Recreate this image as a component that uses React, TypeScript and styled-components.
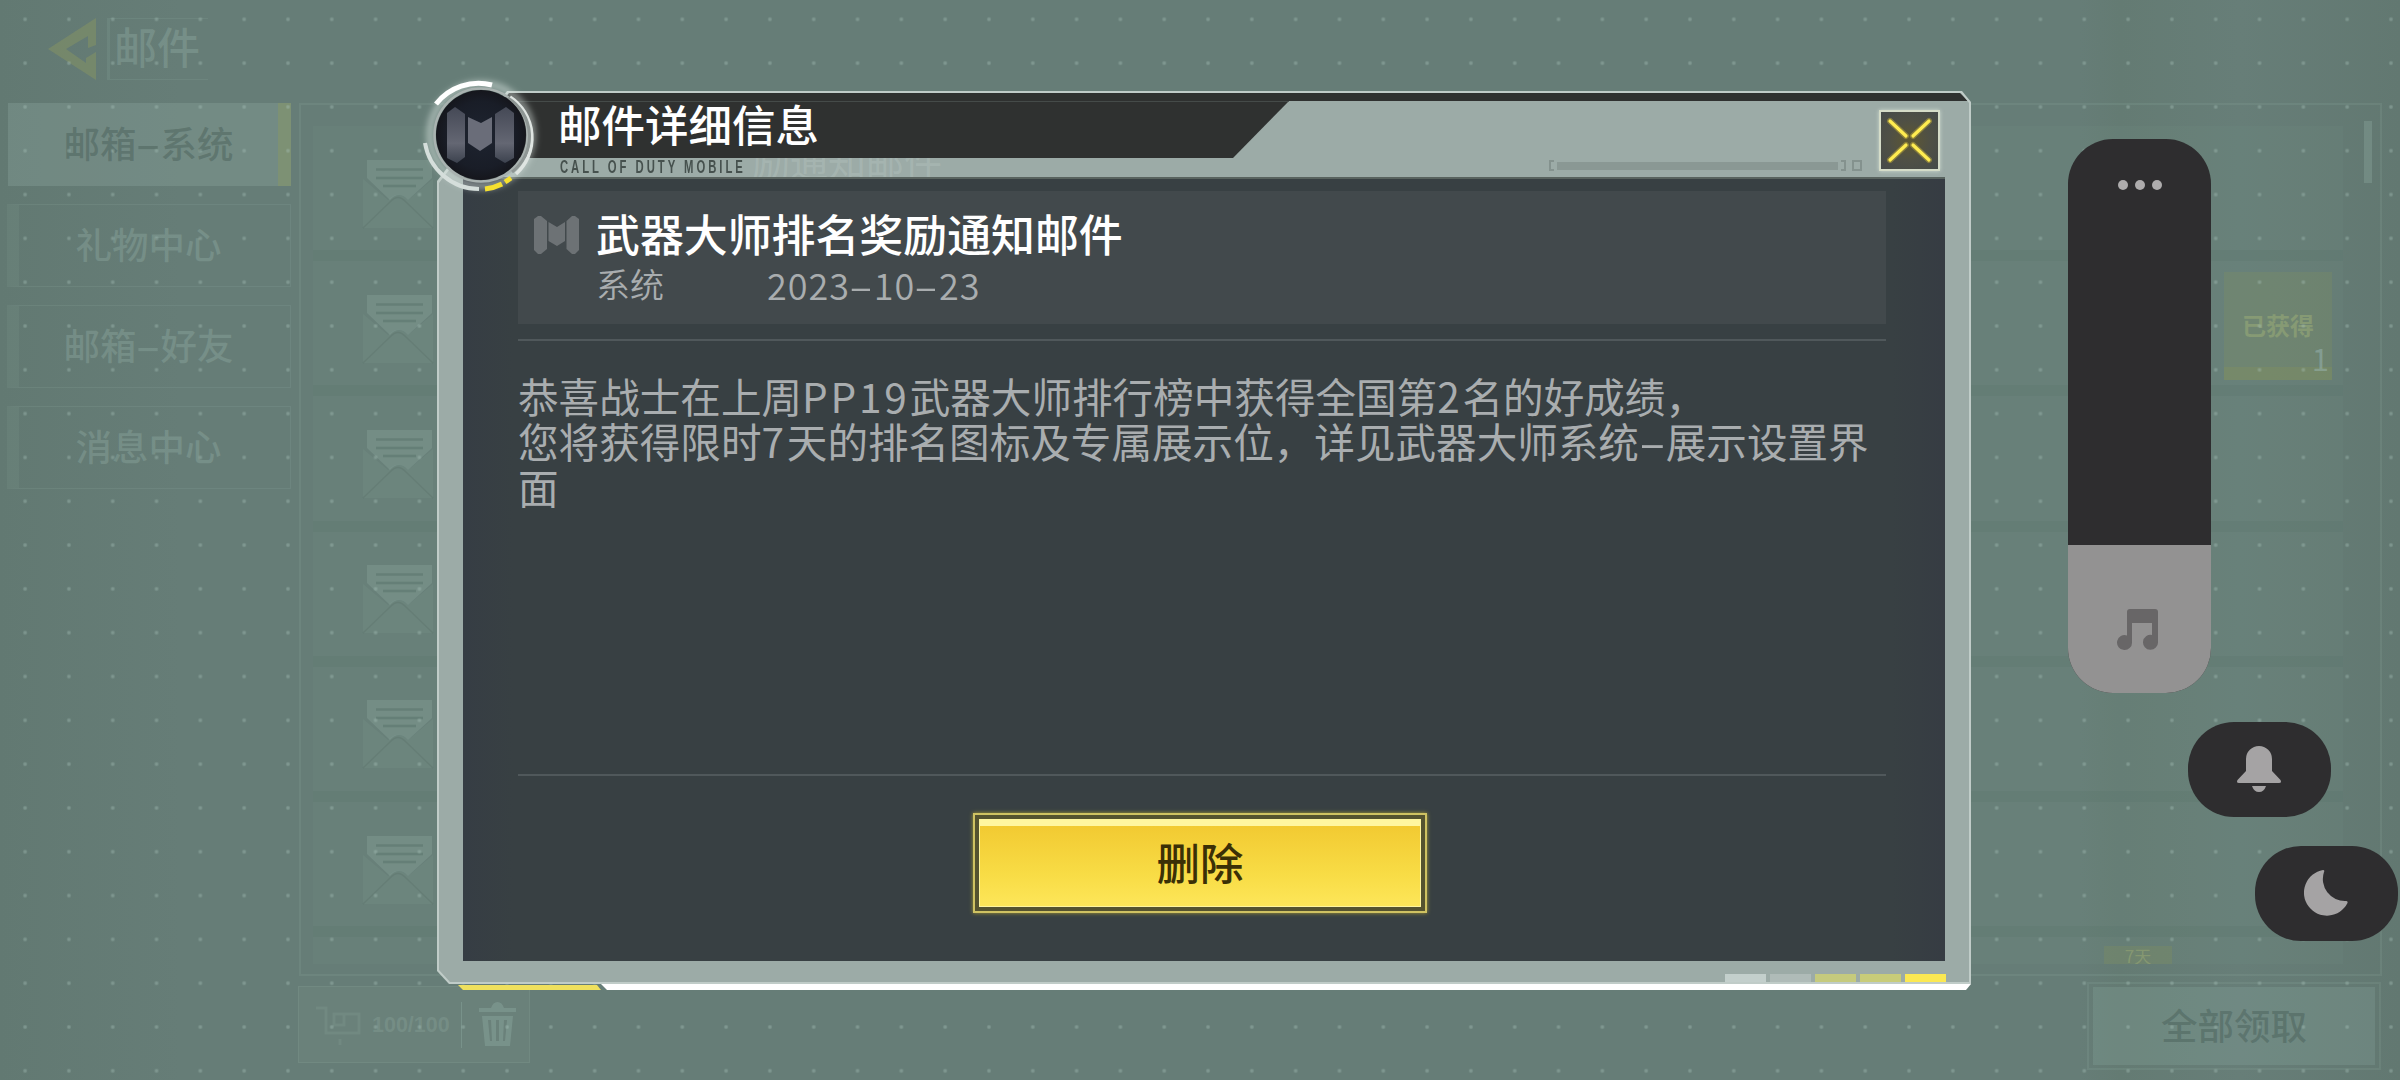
import { ReactNode } from 'react';
import styled, { createGlobalStyle, css } from 'styled-components';

const colors = {
  base: '#667d77',
  ghost: 'rgba(150, 178, 169, 0.34)',
  ghostLine: 'rgba(150, 178, 169, 0.16)',
  ghostDark: 'rgba(66, 88, 82, 0.42)',
  ghostGold: 'rgba(158, 165, 85, 0.3)',
  frame: '#9caba7',
  frameEdge: '#c0ccc8',
  dark: '#384043',
  band: '#2f3130',
  card: '#42494c',
  line: '#50585b',
  text: '#a9adaf',
  system: '#2e2d2f',
  systemIcon: '#a5a3a4',
};

const GlobalStyle = createGlobalStyle`
  * { box-sizing: border-box; }

  body {
    margin: 0;
    font-family: "Noto Sans CJK SC", sans-serif;
    background: ${colors.base};
  }
`;

const Screen = styled.main`
  position: relative;
  width: 2400px;
  height: 1080px;
  overflow: hidden;
  background: linear-gradient(90deg, #627972 0, #667d77 180px, #667d77 2080px, #647b73 2120px, #677e78 2240px, #627871 2400px);
`;

const Dots = styled.div`
  position: absolute;
  inset: 0;
  background: radial-gradient(circle at 50% 50%, rgba(170, 196, 188, 0.45) 0, rgba(170, 196, 188, 0.28) 1.4px, transparent 2.6px);
  background-size: 43.82px 43.82px;
  background-position: 3.2px -2.6px;
`;

/* ---- mailbox behind the dialog ---- */

const Mailbox = styled.div`
  display: flex;
  flex-direction: column;
  height: 1080px;
  color: ${colors.ghost};
`;

const TopBar = styled.header`
  display: flex;
  align-items: center;
  height: 103px;
  padding: 0 0 5px 48px;
`;

const PageTitle = styled.h1`
  display: flex;
  align-items: center;
  width: 101px;
  height: 62px;
  margin: 0 0 0 11px;
  padding: 0 0 7px 4px;
  border-left: 3px solid ${colors.ghostLine};
  border-top: 1px solid ${colors.ghostLine};
  border-bottom: 1px solid ${colors.ghostLine};
  font-size: 43px;
  font-weight: 500;
  line-height: 1;
  white-space: nowrap;
`;

const Columns = styled.div`
  display: flex;
  gap: 8px;
  height: 873px;
  padding-left: 7px;
`;

const Tabs = styled.nav`
  display: flex;
  flex-direction: column;
  gap: 18px;
  width: 284px;
`;

const Tab = styled.div<{ $active?: boolean }>`
  display: flex;
  align-items: center;
  justify-content: center;
  height: 83px;
  padding: 0 12px 3px 0;
  border: 1px solid ${colors.ghostLine};
  border-left: 12px solid rgba(150, 178, 169, 0.1);
  font-size: 36.5px;
  font-weight: 500;
  line-height: 1;
  white-space: nowrap;

  ${props => props.$active && css`
    color: ${colors.ghostDark};
    background: rgba(150, 178, 169, 0.27);
    border: 0;
    border-right: 13px solid rgba(150, 160, 80, 0.3);
    padding: 0 0 3px 11px;
    margin-left: 1px;
  `}
`;

const Dash = styled.span`
  display: inline-block;
  width: 0.66em;
  text-align: center;
  transform: scaleX(2);
`;

const ListPanel = styled.section`
  display: flex;
  justify-content: space-between;
  width: 2083px;
  padding: 21px 8px 10px 12px;
  border: 2px solid ${colors.ghostLine};
`;

const Rows = styled.div`
  display: flex;
  flex-direction: column;
  width: 2030px;
  overflow: hidden;
`;

const MailRow = styled.div`
  display: flex;
  align-items: center;
  justify-content: space-between;
  flex: none;
  height: 135.2px;
  padding: 9px 11px 0 49px;
  border-bottom: 11px solid rgba(70, 94, 87, 0.1);
  background: rgba(130, 160, 152, 0.08);
`;

const Scroller = styled.div`
  width: 8px;
  height: 62px;
  margin: -5px 0 0;
  background: rgba(150, 178, 169, 0.3);
`;

const Reward = styled.div`
  position: relative;
  display: flex;
  align-items: center;
  justify-content: center;
  width: 108px;
  height: 108px;
  margin-top: -3px;
  padding-top: 9px;
  border-bottom: 13px solid rgba(158, 160, 70, 0.16);
  background: rgba(158, 160, 70, 0.14);
  color: rgba(158, 176, 120, 0.5);
  font-size: 24px;
  font-weight: 700;
`;

const RewardCount = styled.span`
  position: absolute;
  right: 3px;
  bottom: -7px;
  color: rgba(160, 190, 190, 0.45);
  font-size: 31px;
  font-weight: 400;
  line-height: 32px;
`;

const ListBadge = styled.div`
  align-self: flex-start;
  width: 68px;
  height: 19px;
  margin: 0 160px 0 auto;
  background: rgba(158, 160, 70, 0.16);
  color: rgba(170, 184, 120, 0.4);
  font-size: 17px;
  line-height: 19px;
  text-align: center;
`;

const BottomBar = styled.footer`
  display: flex;
  align-items: flex-start;
  justify-content: space-between;
  padding: 6px 19px 0 298px;
`;

const Capacity = styled.div`
  display: flex;
  align-items: center;
  width: 232px;
  height: 77px;
  margin-top: 4px;
  padding-left: 17px;
  border: 1px solid ${colors.ghostLine};
  background: rgba(150, 178, 169, 0.08);

  svg {
    flex: none;
  }

  svg:last-child {
    margin-left: 17px;
  }
`;

const CapacityCount = styled.span`
  width: 78px;
  margin: 2px 11px 0 11px;
  font-family: "Liberation Sans", sans-serif;
  font-size: 21.5px;
  font-weight: 700;
  color: rgba(150, 178, 169, 0.26);
`;

const CapacityLine = styled.div`
  width: 1px;
  height: 46px;
  background: ${colors.ghost};
`;

const ClaimAll = styled.div`
  width: 294px;
  height: 88px;
  padding: 3px 4px;
  border: 2px solid ${colors.ghostLine};
`;

const ClaimAllFace = styled.div`
  display: flex;
  align-items: center;
  justify-content: center;
  height: 78px;
  padding-bottom: 1px;
  background: rgba(150, 186, 176, 0.2);
  color: ${colors.ghostDark};
  font-size: 36.5px;
  font-weight: 500;
  line-height: 1;
`;

/* ---- dialog ---- */

const Dialog = styled.section`
  position: absolute;
  left: 437px;
  top: 91px;
  width: 1534px;
`;

const Frame = styled.div`
  height: 893px;
  padding: 2px;
  background: ${colors.frameEdge};
  clip-path: polygon(70px 0, 1525px 0, 1534px 11px, 100% 100%, 12px 100%, 0 880px, 0 90px);
`;

const FrameInner = styled.div`
  height: 889px;
  background: ${colors.frame};
  clip-path: polygon(70px 0, 1522px 0, 1530px 10px, 100% 100%, 11px 100%, 0 877px, 0 90px);
`;

const TopBand = styled.div`
  height: 8px;
  background: ${colors.band};
  clip-path: polygon(0 0, 1521px 0, 1529px 100%, 0 100%);
`;

const DialogHeader = styled.div`
  display: flex;
  justify-content: space-between;
  height: 76px;
`;

const TitleBlock = styled.div`
  width: 850px;
`;

const DialogTitle = styled.h2`
  height: 57px;
  margin: 0;
  padding-left: 119px;
  border-top: 1px solid #454b49;
  background: ${colors.band};
  clip-path: polygon(0 0, 100% 0, 794px 100%, 0 100%);
  color: #fff;
  font-size: 43.5px;
  font-weight: 500;
  line-height: 44px;
`;

const Tagline = styled.div`
  display: flex;
  height: 19px;
  padding-left: 121px;
  overflow: hidden;
  white-space: nowrap;
`;

const TaglineText = styled.span`
  flex: none;
  width: 192px;
  color: #46514e;
  font-family: "Liberation Sans", sans-serif;
  font-size: 17.5px;
  font-weight: 700;
  letter-spacing: 4.6px;
  line-height: 19px;
  transform: scaleX(0.645);
  transform-origin: 0 0;
`;

const TaglineEcho = styled.span`
  color: rgba(185, 200, 195, 0.35);
  font-size: 38px;
  line-height: 4px;
`;

const HeaderTools = styled.div`
  display: flex;
  align-items: flex-start;
  gap: 17px;
  padding: 9px 29px 0 0;
`;

const Slider = styled.div`
  display: flex;
  align-items: center;
  gap: 3px;
  height: 11px;
  margin-top: 50px;
`;

const Bracket = styled.i<{ $side: 'left' | 'right' }>`
  width: 5px;
  height: 11px;
  border: 2px solid #84928e;
  border-${props => (props.$side === 'left' ? 'right' : 'left')}: 0;
`;

const Track = styled.i`
  width: 281px;
  height: 8px;
  background: #8a9894;
`;

const Knob = styled.i`
  width: 10px;
  height: 11px;
  margin-left: 3px;
  border: 2px solid #84928e;
`;

const CloseButton = styled.button`
  display: block;
  width: 61px;
  height: 61px;
  padding: 0;
  border: 2px solid #d5dcc8;
  background: radial-gradient(circle, #5d5732 0, #4f5045 50%, #454a49 100%);
  box-shadow: 0 0 4px rgba(230, 240, 225, 0.7);
`;

const Body = styled.div`
  height: 784px;
  margin: 0 24px;
  padding: 12px 59px 0 55px;
  border-top: 2px solid #59635f;
  background: linear-gradient(90deg, #363d44, ${colors.dark} 50px, ${colors.dark} 1430px, #363c43);
`;

const MailCard = styled.div`
  display: flex;
  height: 133px;
  padding: 17px 16px;
  background: ${colors.card};

  svg {
    margin-top: 8px;
  }
`;

const MailHeading = styled.div`
  margin-left: 17px;
`;

const MailTitle = styled.h3`
  margin: 0;
  color: #fff;
  font-size: 43.9px;
  font-weight: 500;
  line-height: 50px;
  white-space: nowrap;
`;

const MailMeta = styled.div`
  display: flex;
  gap: 103px;
  color: ${colors.text};
  font-size: 34px;
  font-weight: 350;
  line-height: 52px;

  time {
    font-size: 36px;
    letter-spacing: 1px;
  }
`;

const Divider = styled.hr<{ $gap?: number }>`
  height: 2px;
  margin: ${props => props.$gap || 0}px 0 0;
  border: 0;
  background: ${colors.line};
`;

const Message = styled.p`
  height: 433px;
  margin: 0;
  padding-top: 32px;
  color: ${colors.text};
  font-size: 40.6px;
  font-weight: 400;
  line-height: 45.3px;
  white-space: nowrap;
`;

const Latin = styled.span`
  letter-spacing: 2.8px;
`;

const DeleteButton = styled.button`
  display: block;
  width: 454px;
  height: 100px;
  margin: 37px 0 0 455px;
  padding: 4px;
  border: 2px solid #cfc262;
  background: #55532f;
  box-shadow: 0 0 4px #a89b35;
`;

const DeleteFace = styled.span`
  display: flex;
  align-items: center;
  justify-content: center;
  height: 88px;
  border: 1px solid #fff59c;
  border-top: 7px solid #fff6a0;
  background: linear-gradient(#f2ca32, #f8dc45 60%, #fde659);
  color: #3b3006;
  font-family: "Noto Sans CJK SC", sans-serif;
  font-size: 43.5px;
  font-weight: 500;
  line-height: 1;
  padding-bottom: 8px;
`;

const Segments = styled.div`
  display: flex;
  justify-content: flex-end;
  gap: 4px;
  margin: 13px 23px 0;
`;

const Segment = styled.i<{ $color: string }>`
  width: 41px;
  height: 8px;
  background: ${props => props.$color};
`;

const Underline = styled.div`
  display: flex;
  height: 6px;
  padding-left: 21px;
`;

const YellowLine = styled.i`
  width: 143px;
  height: 5px;
  margin-top: 1px;
  background: #efe05d;
  clip-path: polygon(0 0, 139px 0, 100% 100%, 5px 100%);
`;

const WhiteLine = styled.i`
  width: 1370px;
  height: 6px;
  background: #fff;
  clip-path: polygon(0 0, 100% 0, 1365px 100%, 6px 100%);
`;

const Emblem = styled.div`
  position: absolute;
  left: -21px;
  top: -21px;

  svg {
    display: block;
  }
`;

/* ---- system volume panel ---- */

const VolumePanel = styled.aside`
  position: absolute;
  left: 2068px;
  top: 139px;
  display: flex;
  flex-direction: column;
  gap: 29px;
`;

const VolumeBar = styled.div`
  display: flex;
  flex-direction: column;
  justify-content: space-between;
  width: 143px;
  height: 554px;
  border-radius: 45px;
  overflow: hidden;
  background: ${colors.system};
`;

const More = styled.div`
  display: flex;
  justify-content: center;
  gap: 7px;
  padding-top: 41px;

  i {
    width: 10px;
    height: 10px;
    border-radius: 50%;
    background: #aeacad;
  }
`;

const Level = styled.div`
  height: 148px;
  padding: 64px 0 0 49px;
  background: #939292;
`;

const Pill = styled.div<{ $shift: number }>`
  display: flex;
  align-items: center;
  justify-content: center;
  width: 143px;
  height: 95px;
  margin-left: ${props => props.$shift}px;
  padding: 0 2px 1px 0;
  border-radius: 46px;
  background: ${colors.system};
`;

const BackArrow = () => (
  <svg width="48" height="62" viewBox="0 0 48 62">
    <path d="M48 0V27L40 30V18L18 31L38 45V40L48 34V62L0 31Z" fill={colors.ghostGold} />
  </svg>
);

const Envelope = () => (
  <svg width="72" height="72" viewBox="0 0 72 72">
    <path d="M1 22V71H71V22L46 43Q36 32 26 43Z" fill="rgba(150,178,169,.1)" />
    <path d="M1 71L28 45Q36 36 44 45L71 71" fill="none" stroke="rgba(66,88,82,.16)" strokeWidth="1.5" />
    <path d="M5 3H70V21L46 43Q37 33 28 43L5 21Z" fill="rgba(150,178,169,.26)" />
    <path d="M14 12.5H61M14 21H61M21 29H54" stroke="rgba(84,110,103,.45)" strokeWidth="2.4" />
  </svg>
);

const StorageIcon = () => (
  <svg width="45" height="40" viewBox="0 0 45 40" fill="none" stroke={colors.ghostLine} strokeWidth="3">
    <path d="M0 3H10V28H43V9H18V20H28V9" />
    <path d="M24 34V40" />
  </svg>
);

const Trash = () => (
  <svg width="37" height="45" viewBox="0 0 37 45" fill={colors.ghost}>
    <path d="M0 6H12Q14 0 18.500 0T25 6H37V10H0Z" />
    <path fillRule="evenodd" d="M3 14H34L31 44H6ZM9 18L11 39H13L12 18ZM17 18V39H20V18ZM25 18L24 39H26L28 18Z" />
  </svg>
);

const MailMark = () => (
  <svg width="45" height="38" viewBox="0 0 45 38" fill="#6d7275">
    <path d="M0 3L4 0H7L13 5V33L7 38H4L0 34Z" />
    <path d="M14.500 6L23 11L31 6V25L23 30L14.500 25Z" />
    <path d="M45 3L41 0H38L32.500 5V33L38 38H41L45 34Z" />
  </svg>
);

const EmblemIcon = () => (
  <svg width="130" height="130" viewBox="0 0 130 130">
    <defs>
      <radialGradient id="disc">
        <stop offset="0" stopColor="#1e2430" />
        <stop offset=".75" stopColor="#191d27" />
        <stop offset="1" stopColor="#15161c" />
      </radialGradient>
      <linearGradient id="wing" x1="0" y1="0" x2="0" y2="1">
        <stop offset="0" stopColor="#454956" />
        <stop offset=".65" stopColor="#646773" />
        <stop offset="1" stopColor="#3c424e" />
      </linearGradient>
      <filter id="glow" x="-20%" y="-20%" width="140%" height="140%">
        <feGaussianBlur stdDeviation="3" />
      </filter>
    </defs>
    <g fill="none">
      <circle cx="65" cy="65" r="51" stroke="#e8f2ee" strokeOpacity=".5" strokeWidth="7" filter="url(#glow)" />
      <circle cx="65" cy="65" r="46.500" stroke="#a9b2b0" strokeWidth="2.500" />
      <path d="M20 34A54 54 0 0 1 76 15" stroke="#fff" strokeWidth="5" />
      <path d="M94 27A49 49 0 0 1 100 104" stroke="#dfe5e2" strokeWidth="3.500" />
      <path d="M92 28A45 45 0 0 1 96 102" stroke="#8e9694" strokeWidth="3" />
      <path d="M9 73A55 55 0 0 0 63 119" stroke="#d5dedb" strokeWidth="4" />
      <path d="M69 119Q78 118 86 114" stroke="#f6e02f" strokeWidth="5" />
      <path d="M89 112L95 108" stroke="#f6e02f" strokeWidth="5" />
    </g>
    <circle cx="65" cy="65" r="45" fill="url(#disc)" />
    <path d="M31 43L39 37L49 44V87L41 93L31 88Z" fill="url(#wing)" />
    <path d="M52 47L65 53L76 47V73L64 81L52 73Z" fill="#6a6d79" />
    <path d="M98 43L90 37L79 44V87L89 93L98 88Z" fill="url(#wing)" />
  </svg>
);

const CloseIcon = () => (
  <svg width="57" height="57" viewBox="0 0 57 57" fill="none" strokeLinecap="round">
    <path d="M9 9L25 24M48 9L32 24M9 48L25 33M48 48L32 33" stroke="#b6a43a" strokeOpacity=".55" strokeWidth="6" />
    <path d="M9 9L25 24M48 9L32 24M9 48L25 33M48 48L32 33" stroke="#ffec50" strokeWidth="3.200" />
  </svg>
);

const Note = () => (
  <svg width="42" height="42" viewBox="0 0 42 42" fill="#686667">
    <path d="M10 3Q10 0 13 0H38Q41 0 41 3V33A7.500 7.500 0 1 1 35 26V14H15V33A7.500 7.500 0 1 1 10 26.500Z" />
  </svg>
);

const Bell = () => (
  <svg width="44" height="48" viewBox="0 0 44 48" fill={colors.systemIcon}>
    <path d="M9 14A13 13 0 0 1 35 14V26L43.500 35Q45 38 42 38H2Q-1 38 .500 35L9 26Z" />
    <path d="M15 41H29Q27 47 22 47T15 41Z" />
  </svg>
);

const Moon = () => (
  <svg width="44" height="46" viewBox="0 0 44 46" fill={colors.systemIcon}>
    <path d="M19 0Q21 0 20 2A22 22 0 0 0 42 31Q44 31 43.500 33A23 23 0 1 1 19 0Z" />
  </svg>
);

interface TabItem {
  label: ReactNode;
  active?: boolean;
}

const tabs: TabItem[] = [
  { label: <>邮箱<Dash>-</Dash>系统</>, active: true },
  { label: '礼物中心' },
  { label: <>邮箱<Dash>-</Dash>好友</> },
  { label: '消息中心' },
];

const segmentColors = ['#c3cfcc', '#afbbb8', '#c5ca7d', '#c8cc79', '#fbe852'];

const MailboxPage = () => (
  <Mailbox>
    <TopBar>
      <BackArrow />
      <PageTitle>邮件</PageTitle>
    </TopBar>
    <Columns>
      <Tabs>
        {tabs.map((tab, i) => <Tab key={i} $active={tab.active}>{tab.label}</Tab>)}
      </Tabs>
      <ListPanel>
        <Rows>
          {[0, 1, 2, 3, 4, 5].map(i => (
            <MailRow key={i}>
              <Envelope />
              {i === 1 && <Reward>已获得<RewardCount>1</RewardCount></Reward>}
            </MailRow>
          ))}
          <MailRow>
            <ListBadge>7天</ListBadge>
          </MailRow>
        </Rows>
        <Scroller />
      </ListPanel>
    </Columns>
    <BottomBar>
      <Capacity>
        <StorageIcon />
        <CapacityCount>100/100</CapacityCount>
        <CapacityLine />
        <Trash />
      </Capacity>
      <ClaimAll><ClaimAllFace>全部领取</ClaimAllFace></ClaimAll>
    </BottomBar>
  </Mailbox>
);

const MailDialog = () => (
  <Dialog>
    <Frame>
      <FrameInner>
        <TopBand />
        <DialogHeader>
          <TitleBlock>
            <DialogTitle>邮件详细信息</DialogTitle>
            <Tagline>
              <TaglineText>CALL OF DUTY MOBILE</TaglineText>
              <TaglineEcho>励通知邮件</TaglineEcho>
            </Tagline>
          </TitleBlock>
          <HeaderTools>
            <Slider>
              <Bracket $side="left" />
              <Track />
              <Bracket $side="right" />
              <Knob />
            </Slider>
            <CloseButton aria-label="close"><CloseIcon /></CloseButton>
          </HeaderTools>
        </DialogHeader>
        <Body>
          <MailCard>
            <MailMark />
            <MailHeading>
              <MailTitle>武器大师排名奖励通知邮件</MailTitle>
              <MailMeta>
                <span>系统</span>
                <time>2023<Dash>-</Dash>10<Dash>-</Dash>23</time>
              </MailMeta>
            </MailHeading>
          </MailCard>
          <Divider $gap={15} />
          <Message>
            恭喜战士在上周<Latin>PP19</Latin>武器大师排行榜中获得全国第<Latin>2</Latin>名的好成绩，<br />
            您将获得限时<Latin>7</Latin>天的排名图标及专属展示位，详见武器大师系统<Dash>-</Dash>展示设置界<br />
            面
          </Message>
          <Divider />
          <DeleteButton><DeleteFace>删除</DeleteFace></DeleteButton>
        </Body>
        <Segments>
          {segmentColors.map(color => <Segment key={color} $color={color} />)}
        </Segments>
      </FrameInner>
    </Frame>
    <Underline>
      <YellowLine />
      <WhiteLine />
    </Underline>
    <Emblem><EmblemIcon /></Emblem>
  </Dialog>
);

export default function App() {
  return (
    <Screen>
      <GlobalStyle />
      <MailboxPage />
      <Dots />
      <MailDialog />
      <VolumePanel>
        <VolumeBar>
          <More><i /><i /><i /></More>
          <Level><Note /></Level>
        </VolumeBar>
        <Pill $shift={120}><Bell /></Pill>
        <Pill $shift={187}><Moon /></Pill>
      </VolumePanel>
    </Screen>
  );
}
